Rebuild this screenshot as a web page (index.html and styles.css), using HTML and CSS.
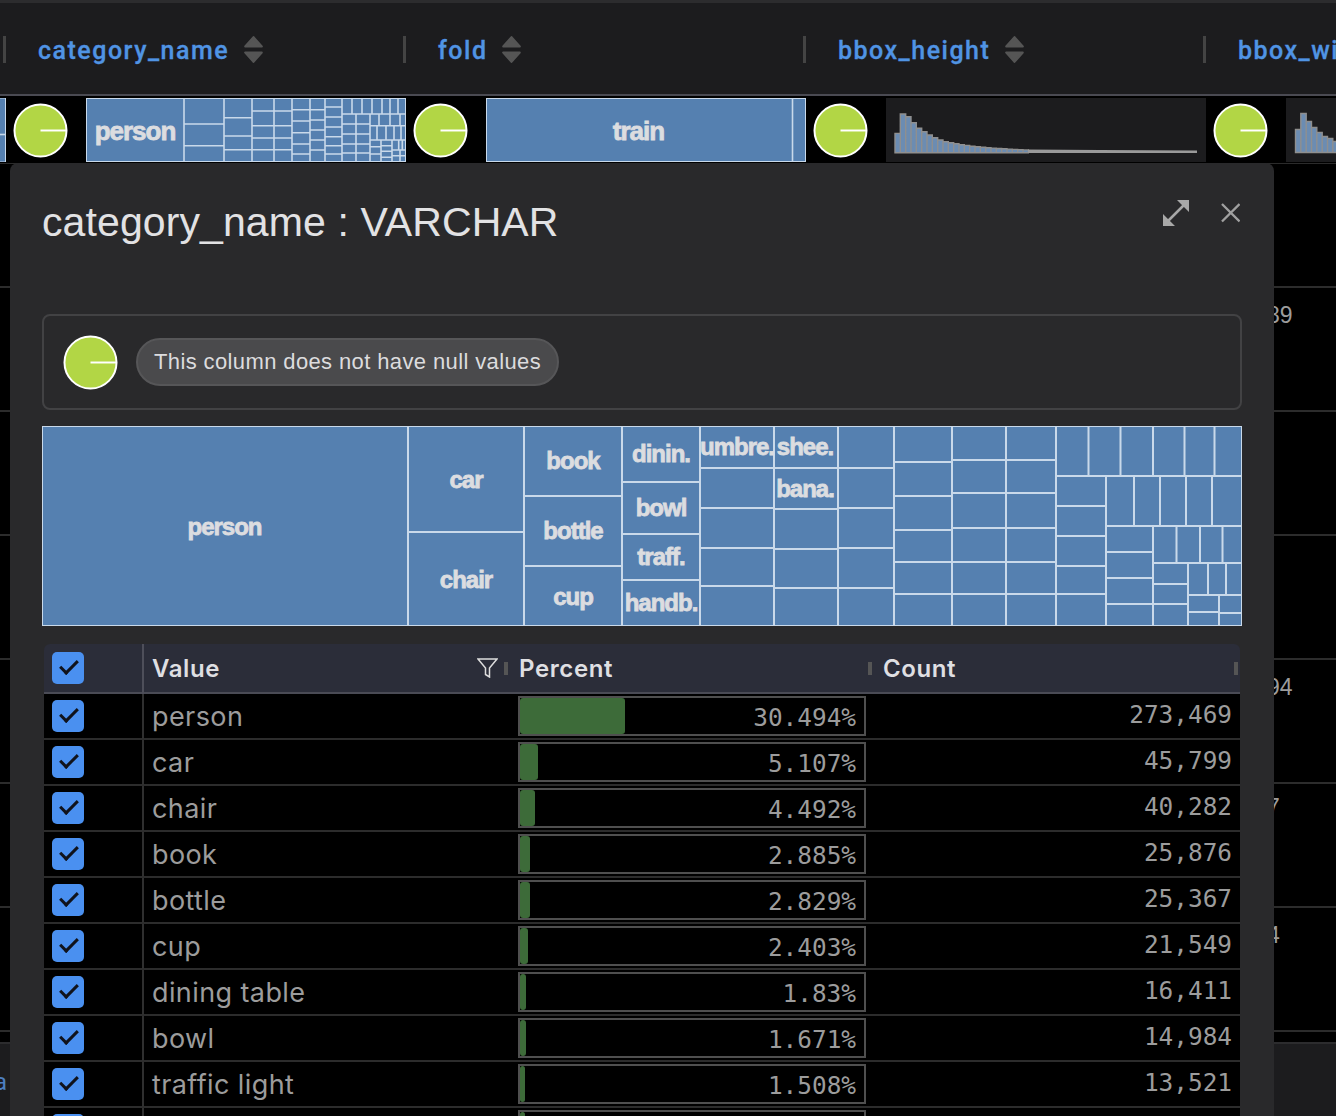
FILE: index.html
```html
<!DOCTYPE html>
<html lang="en">
<head>
  <meta charset="UTF-8">
  <title>category_name : VARCHAR</title>
  <link rel="stylesheet" href="styles.css">
</head>
<body>
  <!-- shared icons -->
  <svg class="defs" aria-hidden="true">
    <symbol id="pie" viewBox="0 0 56 56">
      <circle cx="28" cy="28" r="26.5" fill="#b2d645" stroke="#fff" stroke-width="2"/>
      <line x1="28" y1="28" x2="54" y2="28" stroke="#fff" stroke-width="2"/>
    </symbol>
    <symbol id="sort" viewBox="0 0 20 28">
      <path d="M10 2l8 9H2zM10 26l-8-9h16z" fill="#555" stroke="#555" stroke-width="2" stroke-linejoin="round"/>
    </symbol>
  </svg>

  <div class="head">
    <div class="head-edge"></div>
    <div class="head-col"><span class="head-name">category_name</span><svg class="sort"><use href="#sort"/></svg></div>
    <div class="head-col"><span class="head-name">fold</span><svg class="sort"><use href="#sort"/></svg></div>
    <div class="head-col"><span class="head-name">bbox_height</span><svg class="sort"><use href="#sort"/></svg></div>
    <div class="head-col"><span class="head-name">bbox_width</span><svg class="sort"><use href="#sort"/></svg></div>
  </div>

  <div class="summary">
    <svg class="edge-chart" viewBox="0 98 6 64">
      <rect class="tm-box" x="-2" y="98" width="7.5" height="64"/>
      <path class="tm-line" d="M0 134.5H6"/>
    </svg>
    <div class="sum-col">
      <div class="null-cell"><svg class="pie"><use href="#pie"/></svg></div>
      <svg class="sum-chart" viewBox="86 98 320 64">
        <rect class="tm-box" x="86.5" y="98.5" width="319" height="63"/>
        <path class="tm-line" d="M184 98V162M224 98V162M252 98V162M274 98V162M292 98V162M310 98V162M325 98V162M342 98V162
          M184 124H224M184 145.7H224
          M224 117.7H252M224 136H252M224 149.7H252
          M252 111H292M252 125.7H292M252 138H292M252 149.7H292
          M292 109.7H310M292 121H310M292 132.7H310M292 144H310M292 154H310
          M310 109.7H325M310 120H325M310 130H325M310 140H325M310 150H325
          M325 107H342M325 117H342M325 127H342M325 136.7H342M325 145.7H342M325 154H342
          M342 114H406M352 98V114M362 98V114M372 98V114M382 98V114M390 98V114M398 98V114
          M356 114V162M370 114V162M342 124H370M342 134H370M342 144H370M342 153H370
          M370 125.7H406M379 114V125.7M390 114V125.7M400 114V125.7
          M370 140H406M377 125.7V140M386 125.7V140M394 125.7V140M401 125.7V140
          M381 140V162M392 140V162M370 146.7H381M370 154H381M381 145.7H392M381 151.3H392M381 157.3H392
          M392 150H406M398.7 140V150M402.3 140V150M392 155.7H406M400 150V162"/>
        <text class="tm-label tm-label-big" x="135" y="140">person</text>
      </svg>
    </div>
    <div class="sum-col">
      <div class="null-cell"><svg class="pie"><use href="#pie"/></svg></div>
      <svg class="sum-chart" viewBox="486 98 320 64">
        <rect class="tm-box" x="486.5" y="98.5" width="319" height="63"/>
        <path class="tm-line" d="M792.5 98V162"/>
        <text class="tm-label tm-label-big" x="638.5" y="140">train</text>
      </svg>
    </div>
    <div class="sum-col">
      <div class="null-cell"><svg class="pie"><use href="#pie"/></svg></div>
      <svg class="sum-chart hist" viewBox="886 98 320 64">
        <path class="hist-bar" d="M895 133.4h5.3v19.3h-5.3zM900.3 114h5.4v38.7h-5.4zM905.7 116.7h5.3v36h-5.3zM911 122.7h5.3v30h-5.3zM916.3 128.3h5.4v24.4h-5.4zM921.7 131.7h5.3v21h-5.3zM927 135h5.3v17.7h-5.3zM932.3 137.7h5.4v15h-5.4zM937.7 140h5.3v12.7h-5.3zM943 141.7h5.3v11h-5.3zM948.3 142.7h5.4v10h-5.4zM953.7 143.7h5.3v9h-5.3zM959 144.7h5.3v8h-5.3zM964.3 145.4h5.4v7.3h-5.4zM969.7 146.2h5.3v6.5h-5.3zM975 146.7h5.3v6h-5.3zM980.3 147.2h5.4v5.5h-5.4zM985.7 147.7h5.3v5h-5.3zM991 148.1h5.3v4.6h-5.3zM996.3 148.5h5.4v4.2h-5.4zM1001.7 148.8h5.3v3.9h-5.3zM1007 149.1h5.3v3.6h-5.3zM1012.3 149.4h5.4v3.3h-5.4zM1017.7 149.7h5.3v3h-5.3zM1023 149.9h5.3v2.8h-5.3z"/>
        <path class="hist-tail" d="M1028 149.5L1100 150L1197 150.5V153H1028z"/>
      </svg>
    </div>
    <div class="sum-col">
      <div class="null-cell"><svg class="pie"><use href="#pie"/></svg></div>
      <svg class="sum-chart hist" viewBox="1286 98 320 64">
        <path class="hist-bar" d="M1295.5 129.5h5.3v23h-5.3zM1300.8 113.5h5.4v39h-5.4zM1306.2 121.5h5.3v31h-5.3zM1311.5 127.5h5.3v25h-5.3zM1316.8 132.5h5.4v20h-5.4zM1322.2 136.5h5.3v16h-5.3zM1327.5 138.5h5.3v14h-5.3zM1332.8 141.5h5.4v11h-5.4z"/>
      </svg>
    </div>
  </div>

  <div class="rows">
    <div class="row"></div>
    <div class="row">39.89</div>
    <div class="row"></div>
    <div class="row"></div>
    <div class="row">27.94</div>
    <div class="row row-low">0.57</div>
    <div class="row">0.14</div>
  </div>
  <div class="foot"><span class="foot-text">a</span></div>

  <div class="modal">
    <div class="modal-head">
      <h1 class="modal-title">category_name : VARCHAR</h1>
      <svg class="icon-expand" viewBox="0 0 26 26">
        <path d="M5 21L21 5" stroke="#a8a8a8" stroke-width="2.5"/>
        <path d="M26 0V12L14 0zM0 26V14L12 26z" fill="#a8a8a8"/>
      </svg>
      <svg class="icon-close" viewBox="0 0 20 20">
        <path d="M1 1L19 19M19 1L1 19" stroke="#a0a0a0" stroke-width="2.4" fill="none"/>
      </svg>
    </div>

    <div class="null-panel">
      <svg class="pie"><use href="#pie"/></svg>
      <span class="null-pill">This column does not have null values</span>
    </div>

    <svg class="treemap" viewBox="42 426 1200 200">
      <rect class="tm-box" x="42.5" y="426.5" width="1199" height="199"/>
      <path class="tm-line tm-line-wide" d="M408 426V626M524 426V626M622 426V626M700 426V626M774 426V626M838 426V626M894 426V626M952 426V626M1006 426V626M1056 426V626
        M408 532H524M524 496H622M524 566H622
        M622 482H700M622 534H700M622 580H700
        M700 468H774M700 508H774M700 548H774M700 586H774
        M774 468H838M774 509H838M774 549H838M774 588H838
        M838 468H894M838 508H894M838 548H894M838 588H894
        M894 462H952M894 496H952M894 530H952M894 562H952M894 594H952
        M952 460H1056M952 493H1056M952 528H1056M952 562H1056M952 594H1056
        M1056 476H1242M1088.5 426V476M1120.5 426V476M1153 426V476M1184.5 426V476M1214.5 426V476
        M1106 476V626M1056 506H1106M1056 536H1106M1056 566H1106M1056 594H1106
        M1106 526H1242M1134 476V526M1160 476V526M1186 476V526M1212 476V526
        M1153 526V626M1106 552H1153M1106 578H1153M1106 604H1153
        M1153 563H1242M1176.5 526V563M1200 526V563M1222.5 526V563
        M1188 563V626M1153 584H1188M1153 604H1188
        M1188 595H1242M1208 563V595M1226 563V595
        M1219 595V626M1188 612H1219M1219 613H1242"/>
      <text class="tm-label" x="224.5" y="535">person</text>
      <text class="tm-label" x="466" y="488">car</text>
      <text class="tm-label" x="466" y="588">chair</text>
      <text class="tm-label" x="573" y="469">book</text>
      <text class="tm-label" x="573" y="539">bottle</text>
      <text class="tm-label" x="573" y="605">cup</text>
      <text class="tm-label" x="661" y="462">dinin.</text>
      <text class="tm-label" x="661" y="516">bowl</text>
      <text class="tm-label" x="661" y="565">traff.</text>
      <text class="tm-label" x="661" y="611">handb.</text>
      <text class="tm-label" x="737" y="455">umbre.</text>
      <text class="tm-label" x="805" y="455">shee.</text>
      <text class="tm-label" x="805" y="497">bana.</text>
    </svg>

    <div class="grid">
      <div class="grid-head">
        <div class="cell-check"><span class="check"></span></div>
        <div class="th th-value">Value
          <svg class="icon-filter" viewBox="0 0 21 20"><path d="M1 1h19l-7.5 9v9l-4-2.5V10z" fill="none" stroke="#ddd" stroke-width="1.5"/></svg>
        </div>
        <div class="th">Percent</div>
        <div class="th th-last">Count</div>
      </div>

      <div class="grid-row">
        <div class="cell-check"><span class="check"></span></div>
        <div class="cell-value">person</div>
        <div class="cell-pct"><div class="pct-frame"><div class="pct-bar" style="width:30.494%"></div><span class="pct-num">30.494%</span></div></div>
        <div class="cell-count">273,469</div>
      </div>
      <div class="grid-row">
        <div class="cell-check"><span class="check"></span></div>
        <div class="cell-value">car</div>
        <div class="cell-pct"><div class="pct-frame"><div class="pct-bar" style="width:5.107%"></div><span class="pct-num">5.107%</span></div></div>
        <div class="cell-count">45,799</div>
      </div>
      <div class="grid-row">
        <div class="cell-check"><span class="check"></span></div>
        <div class="cell-value">chair</div>
        <div class="cell-pct"><div class="pct-frame"><div class="pct-bar" style="width:4.492%"></div><span class="pct-num">4.492%</span></div></div>
        <div class="cell-count">40,282</div>
      </div>
      <div class="grid-row">
        <div class="cell-check"><span class="check"></span></div>
        <div class="cell-value">book</div>
        <div class="cell-pct"><div class="pct-frame"><div class="pct-bar" style="width:2.885%"></div><span class="pct-num">2.885%</span></div></div>
        <div class="cell-count">25,876</div>
      </div>
      <div class="grid-row">
        <div class="cell-check"><span class="check"></span></div>
        <div class="cell-value">bottle</div>
        <div class="cell-pct"><div class="pct-frame"><div class="pct-bar" style="width:2.829%"></div><span class="pct-num">2.829%</span></div></div>
        <div class="cell-count">25,367</div>
      </div>
      <div class="grid-row">
        <div class="cell-check"><span class="check"></span></div>
        <div class="cell-value">cup</div>
        <div class="cell-pct"><div class="pct-frame"><div class="pct-bar" style="width:2.403%"></div><span class="pct-num">2.403%</span></div></div>
        <div class="cell-count">21,549</div>
      </div>
      <div class="grid-row">
        <div class="cell-check"><span class="check"></span></div>
        <div class="cell-value">dining table</div>
        <div class="cell-pct"><div class="pct-frame"><div class="pct-bar" style="width:1.83%"></div><span class="pct-num">1.83%</span></div></div>
        <div class="cell-count">16,411</div>
      </div>
      <div class="grid-row">
        <div class="cell-check"><span class="check"></span></div>
        <div class="cell-value">bowl</div>
        <div class="cell-pct"><div class="pct-frame"><div class="pct-bar" style="width:1.671%"></div><span class="pct-num">1.671%</span></div></div>
        <div class="cell-count">14,984</div>
      </div>
      <div class="grid-row">
        <div class="cell-check"><span class="check"></span></div>
        <div class="cell-value">traffic light</div>
        <div class="cell-pct"><div class="pct-frame"><div class="pct-bar" style="width:1.508%"></div><span class="pct-num">1.508%</span></div></div>
        <div class="cell-count">13,521</div>
      </div>
      <div class="grid-row">
        <div class="cell-check"><span class="check"></span></div>
        <div class="cell-value"></div>
        <div class="cell-pct"><div class="pct-frame"><div class="pct-bar" style="width:1.4%"></div></div></div>
        <div class="cell-count"></div>
      </div>
    </div>
  </div>
</body>
</html>
```

FILE: styles.css
```css
html, body {
  margin: 0;
  height: 1116px;
  overflow: hidden;
  background: #000;
}
body {
  position: relative;
  font-family: "Inter", sans-serif;
  color: #9c9c9c;
}
.defs {
  display: none;
}

/* column header */
.head {
  display: flex;
  height: 91px;
  width: 1700px;
  background: #1c1c1e;
  border-top: 3px solid #2c2c2e;
  border-bottom: 2px solid #4a4a52;
}
.head-edge {
  width: 6px;
  flex: none;
  position: relative;
}
.head-col {
  width: 400px;
  flex: none;
  box-sizing: border-box;
  padding: 2px 0 0 32px;
  display: flex;
  align-items: center;
  gap: 14px;
  position: relative;
}
.head-edge::after, .head-col::after {
  content: "";
  position: absolute;
  right: 0;
  top: 33px;
  width: 3.5px;
  height: 27px;
  background: #444;
}
.head-name {
  position: relative;
  top: 1px;
  font-family: "Roboto", sans-serif;
  font-weight: 500;
  font-size: 25px;
  letter-spacing: 1.5px;
  color: #5094e4;
  -webkit-text-stroke: 0.3px #5094e4;
}
.sort {
  width: 21px;
  height: 29px;
}

/* summary row */
.summary {
  display: flex;
  width: 1700px;
  height: 68px;
  box-sizing: border-box;
  padding-top: 2px;
  border-bottom: 1px solid #2b2b2b;
}
.edge-chart {
  width: 6px;
  height: 64px;
  flex: none;
}
.sum-col {
  width: 400px;
  flex: none;
  display: flex;
}
.null-cell {
  width: 80px;
  height: 64px;
  flex: none;
  display: flex;
  padding-left: 7px;
  box-sizing: border-box;
  align-items: center;
}
.pie {
  width: 55px;
  height: 55px;
  flex: none;
}
.sum-chart {
  width: 320px;
  height: 64px;
  flex: none;
}
.hist {
  background: #1c1c1e;
}
.hist-bar {
  fill: #6b8cb2;
  stroke: #8f8f8f;
  stroke-width: 1.4;
}
.hist-tail {
  fill: #9a9a9a;
}

/* treemap */
.tm-box {
  fill: #5580b0;
  stroke: #c9d9ea;
  stroke-width: 1;
}
.tm-line {
  fill: none;
  stroke: #c9d9ea;
  stroke-width: 1.6;
}
.tm-line-wide {
  stroke-width: 2;
}
.tm-label {
  font-family: "Liberation Sans", sans-serif;
  font-weight: 700;
  font-size: 24px;
  letter-spacing: -1px;
  text-anchor: middle;
  fill: #dcdde0;
  stroke: #dcdde0;
  stroke-width: 0.8;
}
.tm-label-big {
  font-size: 26px;
}

/* rows behind the dialog */
.row {
  height: 124px;
  box-sizing: border-box;
  padding: 13px 0 0 1235px;
  line-height: 28px;
  font-family: "Liberation Sans", sans-serif;
  font-size: 23px;
  border-bottom: 2px solid #2c2c2c;
}
.row-low {
  padding-top: 9px;
}
.foot {
  margin-top: 10px;
  height: 80px;
  padding-top: 24px;
  box-sizing: border-box;
  background: #1c1c1e;
  border-top: 2px solid #2c2c2e;
}
.foot-text {
  display: block;
  margin-left: -6px;
  font-family: "Roboto", sans-serif;
  font-size: 24px;
  color: #4c7fc0;
}

/* dialog */
.modal {
  position: absolute;
  left: 10px;
  top: 163px;
  width: 1264px;
  height: 960px;
  box-sizing: border-box;
  padding: 0 32px;
  background: #29292b;
  border-radius: 8px;
  overflow: hidden;
}
.modal-head {
  display: flex;
  height: 151px;
}
.modal-title {
  margin: 36px 0 0;
  flex: 1;
  font-family: "Liberation Sans", sans-serif;
  font-weight: 400;
  font-size: 41px;
  letter-spacing: 0.1px;
  line-height: 46px;
  color: #e2e2e4;
}
.icon-expand {
  width: 26px;
  height: 26px;
  margin: 37px 0 0;
}
.icon-close {
  width: 19.5px;
  height: 19.5px;
  margin: 40px 2px 0 32px;
}
.null-panel {
  height: 96px;
  box-sizing: border-box;
  border: 2px solid #424244;
  border-radius: 8px;
  padding-left: 19px;
  display: flex;
  align-items: center;
  gap: 18px;
}
.null-pill {
  height: 48px;
  box-sizing: border-box;
  padding: 0 16px;
  display: flex;
  align-items: center;
  border: 2px solid #565658;
  border-radius: 24px;
  background: #4a4a4c;
  font-family: "Liberation Sans", sans-serif;
  font-size: 22px;
  letter-spacing: 0.38px;
  color: #dcdcde;
}
.treemap {
  display: block;
  width: 1200px;
  height: 200px;
  margin-top: 16px;
}

/* value table */
.grid {
  margin: 18px 2px 0;
}
.grid-head, .grid-row {
  display: grid;
  grid-template-columns: 100px 374px 364px 1fr;
}
.grid-head {
  height: 50px;
  box-sizing: border-box;
  background: #2b2d39;
  border-bottom: 2px solid #4a4b55;
  border-radius: 6px 6px 0 0;
}
.grid-row {
  height: 46px;
  box-sizing: border-box;
  background: #000;
  border-bottom: 2px solid #2c2c2c;
}
.cell-check {
  padding: 8px 0 0 8px;
  box-sizing: border-box;
  border-right: 2px solid #2f2f2f;
}
.grid-row .cell-check {
  padding-top: 6px;
}
.grid-head .cell-check {
  border-right-color: #4e4f5a;
}
.check {
  display: block;
  width: 32px;
  height: 32px;
  border-radius: 5px;
  background: #4a90f0;
  position: relative;
}
.check::after {
  content: "";
  position: absolute;
  left: 8px;
  top: 8px;
  width: 15px;
  height: 7px;
  border-left: 3px solid #10131c;
  border-bottom: 3px solid #10131c;
  transform: rotate(-45deg);
}
.th {
  position: relative;
  padding-left: 1px;
  font-weight: 600;
  font-size: 24px;
  letter-spacing: 0.6px;
  line-height: 50px;
  color: #dfdfe2;
}
.th::after {
  content: "";
  position: absolute;
  right: 10px;
  top: 18px;
  width: 4px;
  height: 13px;
  background: #555;
}
.th-value {
  padding-left: 8px;
}
.th-last::after {
  right: 2px;
}
.icon-filter {
  position: absolute;
  right: 20px;
  top: 14px;
  width: 21px;
  height: 20px;
}
.cell-value {
  padding-left: 8px;
  font-size: 27px;
  letter-spacing: 0.4px;
  line-height: 45px;
}
.cell-pct {
  padding-top: 2px;
}
.pct-frame {
  position: relative;
  width: 348px;
  height: 40px;
  box-sizing: border-box;
  border: 2px solid #4f4f4f;
}
.pct-bar {
  position: absolute;
  left: 0;
  top: 0;
  bottom: 0;
  background: #3d6b39;
  border-radius: 3px;
}
.pct-num, .cell-count {
  font-family: "DejaVu Sans Mono", monospace;
  font-size: 24.4px;
}
.pct-num {
  position: absolute;
  right: 8px;
  top: 0;
  line-height: 40px;
}
.cell-count {
  padding-right: 8px;
  text-align: right;
  line-height: 42px;
}
```
